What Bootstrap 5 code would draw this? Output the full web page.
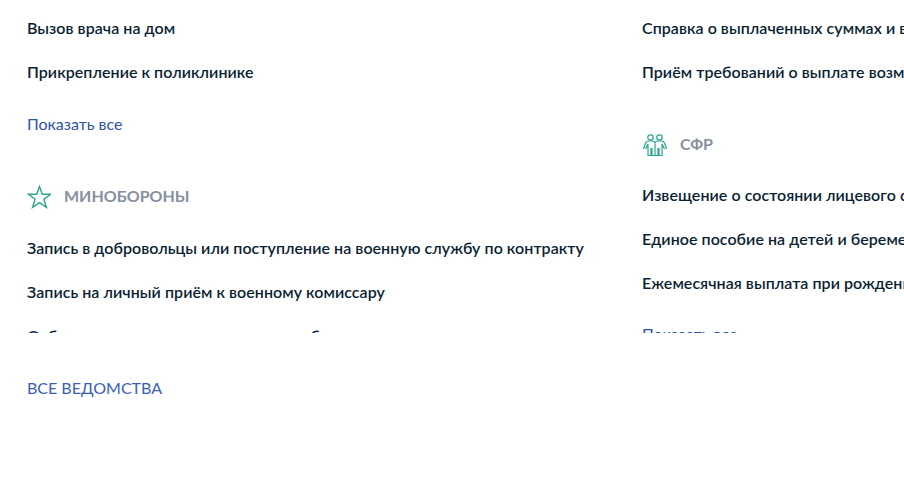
<!DOCTYPE html>
<html lang="ru"><head><meta charset="utf-8">
<link rel="stylesheet" href="https://cdn.jsdelivr.net/npm/bootstrap@5.3.0/dist/css/bootstrap.min.css">
<style>
html,body{height:100%;overflow:hidden;background:#fff}
body{font-family:Lato,"Noto Sans",sans-serif;color:#0b1f33}
.clipbox{height:333px;overflow:hidden;padding:0 0 0 27px;gap:0}
.dept{flex:0 0 615px;min-width:615px;white-space:nowrap}
.svc{height:44px;line-height:44px;font-size:16px;font-weight:600;letter-spacing:.05px;margin:0;color:#0b1f33;text-decoration:none;display:block}
.first{margin-top:6px}
.showall{display:block;font-size:16px;line-height:24px;color:#2f53a5;text-decoration:none;margin-top:18px}
.showall.up1{margin-top:17px}
.dhead{height:32px;margin:44px 0 14px}
.dname{font-size:16px;font-weight:700;color:#86909f;line-height:32px}
.dico{width:24px;height:26px;margin-right:13px;flex:none}
.dico2{width:26px;height:26px;margin-right:12px;flex:none}
.allbtn{padding:43px 0 0 27px;font-size:16px;line-height:24px;color:#3b5fb5;text-decoration:none;display:block}
.dhead.r2{margin:34px 0 13px}
</style></head><body>
<div class="d-flex clipbox">
 <div class="dept">
  <div class="first"></div>
  <a class="svc" href="#">Вызов врача на дом</a>
  <a class="svc" href="#">Прикрепление к поликлинике</a>
  <a class="showall" href="#">Показать все</a>
  <div class="dhead d-flex align-items-center">
   <svg class="dico" viewBox="0 0 24 26" fill="none" stroke="#2aa58c" stroke-width="1.4" stroke-linejoin="miter"><path d="M12.500 3.500l2.800 7.800h8.200l-6.600 5 2.500 8-6.900-4.700-6.900 4.700 2.500-8-6.600-5h8.200z"/></svg>
   <span class="dname">МИНОБОРОНЫ</span>
  </div>
  <a class="svc" href="#">Запись в добровольцы или поступление на военную службу по контракту</a>
  <a class="svc" href="#">Запись на личный приём к военному комиссару</a>
  <a class="svc" href="#">Отбор граждан на контрактную службу в армии</a>
 </div>
 <div class="dept">
  <div class="first"></div>
  <a class="svc" href="#">Справка о выплаченных суммах и взносах</a>
  <a class="svc" href="#">Приём требований о выплате возмещения</a>
  <div class="dhead d-flex align-items-center r2">
   <svg class="dico2" viewBox="0 0 26 26" fill="none" stroke="#2aa58c" stroke-width="1.200"><circle cx="8.500" cy="6.500" r="2.700"/><circle cx="17.500" cy="6.500" r="2.700"/><path d="M1.500 18l2-6q1-2 3-2h4q1.500 0 2.500 2q1-2 2.500-2h4q2 0 3 2l2 6M3.500 18l2.500-5M22.500 18l-2.500-5M6 13v11.500h3v-7h1v7h3V13M13 13v11.500h3v-7h1v7h3V13"/></svg>
   <span class="dname">СФР</span>
  </div>
  <a class="svc" href="#">Извещение о состоянии лицевого счёта</a>
  <a class="svc" href="#">Единое пособие на детей и беременных женщин</a>
  <a class="svc" href="#">Ежемесячная выплата при рождении ребёнка</a>
  <a class="showall up1" href="#">Показать все</a>
 </div>
</div>
<a class="allbtn" href="#">ВСЕ ВЕДОМСТВА</a>
<script src="https://cdn.jsdelivr.net/npm/bootstrap@5.3.0/dist/js/bootstrap.bundle.min.js"></script>
</body></html>
